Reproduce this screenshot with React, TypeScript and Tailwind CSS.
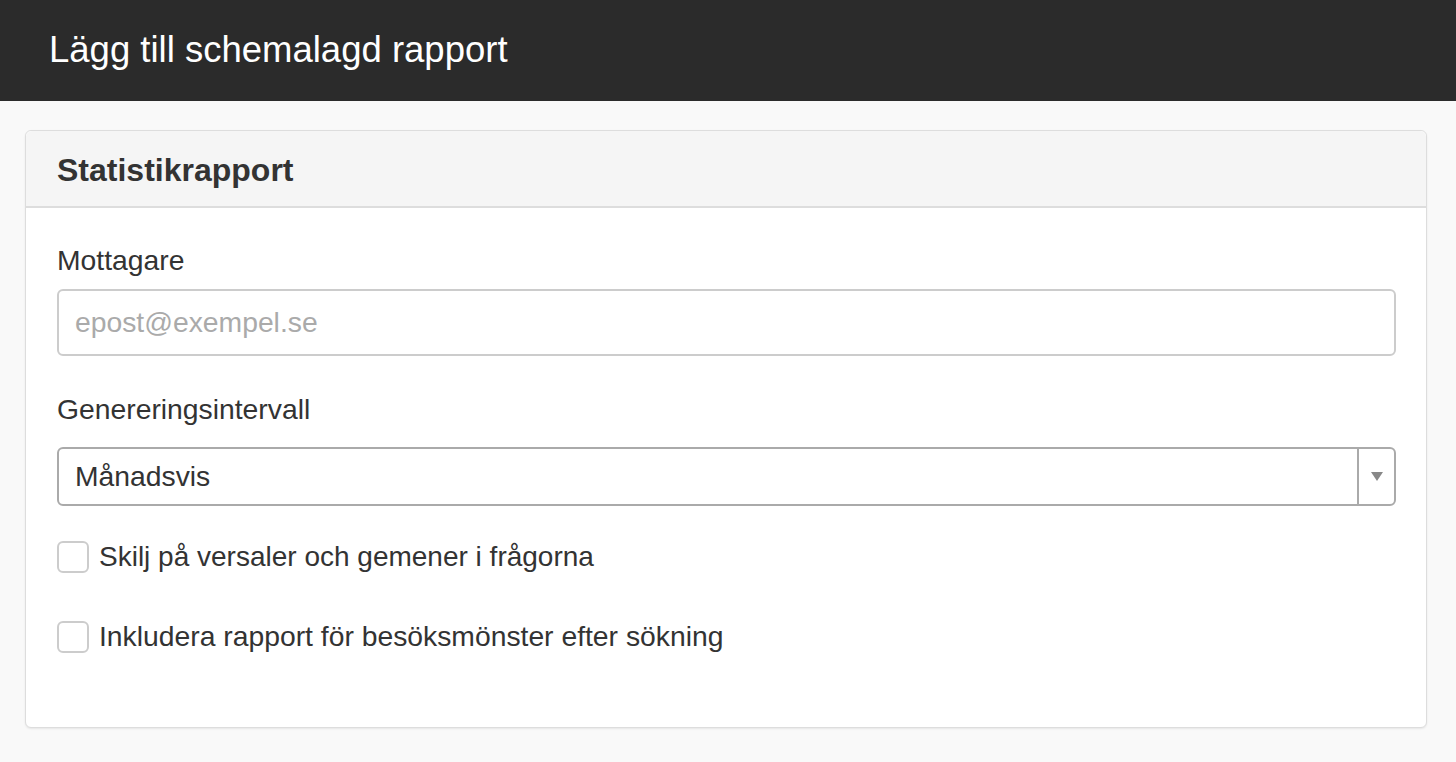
import React from "react";

export default function App() {
  return (
    <div className="min-h-[762px] bg-[#f9f9f9] text-[#333]" style={{ fontFamily: '"Liberation Sans", Arial, sans-serif' }}>
      <div className="h-[101px] bg-[#2b2b2b] flex items-center px-[49px]">
        <h1 className="text-[36.5px] text-white leading-none">Lägg till schemalagd rapport</h1>
      </div>
      <div className="pl-[25px] pr-[29px] pt-[29px] pb-[34px]">
        <div className="bg-white border border-[#ddd] rounded-[6px] shadow-[0_1px_2px_rgba(0,0,0,0.08)]">
          <div className="h-[77px] bg-[#f5f5f5] border-b-2 border-[#ddd] rounded-t-[6px] flex items-center px-[31px] pt-[2px]">
            <h2 className="text-[32px] font-bold leading-none">Statistikrapport</h2>
          </div>
          <div className="pl-[31px] pr-[30px] pt-[38px] pb-[74px]">
            <label className="block text-[28.3px] leading-none mb-[15px]">Mottagare</label>
            <input
              className="block w-full h-[67px] border-2 border-[#ccc] rounded-[6px] px-[16px] text-[28.3px] placeholder:text-[#aaa] outline-none"
              placeholder="epost@exempel.se"
            />
            <label className="block text-[28.3px] leading-none mt-[39px] mb-[23px]">Genereringsintervall</label>
            <div className="flex h-[59px] border-2 border-[#aaa] rounded-[6px] bg-white">
              <div className="flex-1 flex items-center px-[16px] text-[28.3px]">Månadsvis</div>
              <div className="w-[37px] border-l-2 border-[#aaa] flex items-center justify-center">
                <svg width="12" height="9" viewBox="0 0 12 9"><path d="M0 0 L12 0 L6 9 Z" fill="#888" /></svg>
              </div>
            </div>
            <div className="flex items-center gap-[10px] mt-[35px]">
              <span className="w-[32px] h-[32px] border-2 border-[#ccc] rounded-[6px] bg-white" />
              <span className="text-[28px] leading-none">Skilj på versaler och gemener i frågorna</span>
            </div>
            <div className="flex items-center gap-[10px] mt-[48px]">
              <span className="w-[32px] h-[32px] border-2 border-[#ccc] rounded-[6px] bg-white" />
              <span className="text-[28.3px] leading-none">Inkludera rapport för besöksmönster efter sökning</span>
            </div>
          </div>
        </div>
      </div>
    </div>
  );
}
